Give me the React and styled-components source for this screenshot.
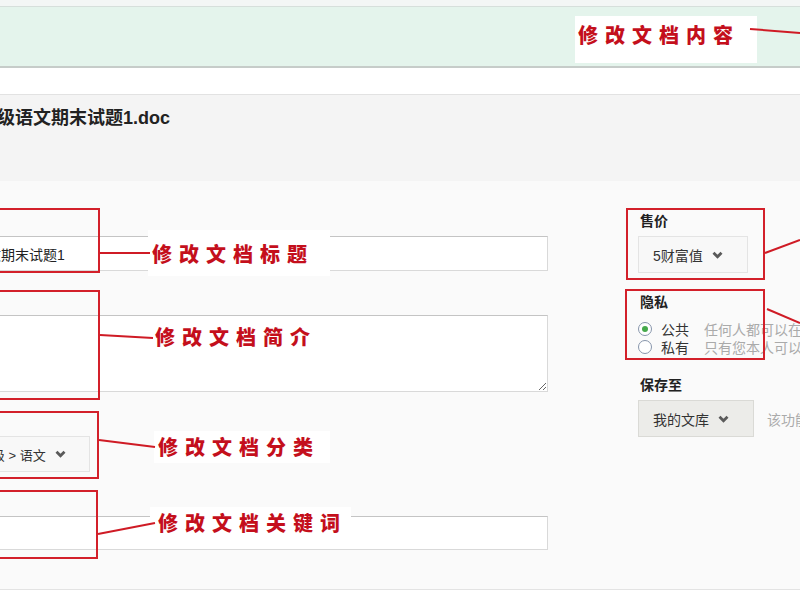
import styled, { createGlobalStyle } from 'styled-components'

const GlobalStyle = createGlobalStyle`
    html, body {
        margin: 0;
        padding: 0;
        background: #ffffff;
    }
    body {
        font-family: "Liberation Sans", "Noto Sans CJK SC", sans-serif;
        font-size: 14px;
        color: #333;
    }
`;

const Page = styled.div`
    position: relative;
    width: 800px;
    height: 600px;
    overflow: hidden;
    background: #ffffff;
`;

const TopStrip = styled.div`
    height: 6px;
    background: #f3f6f5;
    border-bottom: 1px solid #d6dfdb;
`;

const Banner = styled.div`
    height: 59px;
    background: #e4f4ec;
    border-bottom: 2px solid #c6ccc9;
`;

const Spacer = styled.div`
    height: 26px;
    border-bottom: 1px solid #e2e2e2;
`;

const DocHeader = styled.div`
    height: 86px;
    padding-top: 12px;
    box-sizing: border-box;
    background: #f4f4f4;
`;

const DocTitle = styled.h1`
    margin: 0 0 0 -75px;
    font-size: 18px;
    line-height: 22px;
    font-weight: bold;
    color: #222;
    white-space: nowrap;
`;

const FormArea = styled.div`
    display: flex;
    padding: 26px 0 39px;
    background: #fafafa;
    border-bottom: 1px solid #e3e3e3;
`;

const LeftCol = styled.div`
    flex-shrink: 0;
    width: 654px;
    margin-left: -106px;
    display: flex;
    flex-direction: column;
    gap: 15px;
`;

const Field = styled.div`
    display: flex;
    flex-direction: column;
    align-items: flex-start;
`;

const FieldLabel = styled.label`
    line-height: 20px;
    margin-bottom: 9px;
    font-weight: bold;
    color: #333;
`;

const TextInput = styled.input`
    width: 100%;
    height: ${p => p.$h || 35}px;
    box-sizing: border-box;
    padding: 0 8px;
    border: 1px solid #d9d9d9;
    border-top-color: #c4c4c4;
    background: #fff;
    font-family: inherit;
    font-size: 14px;
    color: #222;
    outline: none;
`;

const TextArea = styled.textarea`
    width: 100%;
    height: 77px;
    box-sizing: border-box;
    padding: 6px 8px;
    border: 1px solid #d9d9d9;
    border-top-color: #c4c4c4;
    background: #fff;
    font-family: inherit;
    font-size: 14px;
    outline: none;
    resize: vertical;
`;

const SelectButton = styled.button`
    display: inline-flex;
    align-items: center;
    gap: ${p => p.$gap || 9}px;
    height: ${p => p.$h || 37}px;
    padding: 0 ${p => p.$right || 24}px 0 ${p => p.$left || 14}px;
    border: 1px solid ${p => (p.$muted ? '#dadad6' : '#e4e4e4')};
    background: ${p => (p.$muted ? '#ecece9' : '#f8f8f8')};
    font-family: inherit;
    font-size: ${p => p.$size || 14}px;
    color: #333;
    white-space: nowrap;
    cursor: pointer;
`;

const RightCol = styled.div`
    flex-shrink: 0;
    margin-left: 90px;
    width: 260px;
    display: flex;
    flex-direction: column;
    align-items: flex-start;
    white-space: nowrap;
`;

const SideLabel = styled.div`
    margin: ${p => p.$top || 0}px 0 ${p => p.$bottom || 4}px 2px;
    line-height: 22px;
    font-weight: bold;
    color: #222;
`;

const RadioRow = styled.label`
    display: flex;
    align-items: center;
    height: 18px;
`;

const RadioDot = styled.span`
    position: relative;
    width: 12px;
    height: 12px;
    border: 1.5px solid #8795ab;
    border-radius: 50%;
    background: #fff;
    margin-right: 9px;
    &::after {
        content: '';
        display: ${p => (p.$checked ? 'block' : 'none')};
        position: absolute;
        left: 3px;
        top: 3px;
        width: 6px;
        height: 6px;
        border-radius: 50%;
        background: #45a94a;
    }
`;

const RadioText = styled.span`
    color: #333;
    margin-right: 15px;
`;

const Hint = styled.span`
    color: #aaa;
`;

const SaveRow = styled.div`
    display: flex;
    align-items: center;
    gap: 13px;
`;

// red annotation layer drawn over the screenshot
const Box = styled.div`
    position: absolute;
    left: ${p => p.$l}px;
    top: ${p => p.$t}px;
    width: ${p => p.$r - p.$l}px;
    height: ${p => p.$b - p.$t}px;
    box-sizing: border-box;
    border: 2px solid #d3202a;
`;

const Note = styled.div`
    position: absolute;
    left: ${p => p.$l}px;
    top: ${p => p.$t}px;
    padding: ${p => p.$pad};
    background: #fff;
    font-family: "Noto Sans CJK SC", sans-serif;
    font-size: 20px;
    line-height: 24px;
    font-weight: 900;
    letter-spacing: 7px;
    color: #c40f1c;
    white-space: nowrap;
`;

const Lines = styled.svg`
    position: absolute;
    left: 0;
    top: 0;
    pointer-events: none;
`;

const Chevron = () => (
    <svg width="11" height="8" viewBox="0 0 11 8">
        <path d="M1.5 1.8 L5.5 5.8 L9.5 1.8" fill="none" stroke="#5a5a5a" strokeWidth="2.8" />
    </svg>
)

const boxes = [
    { l: -4, t: 208, r: 100, b: 273 },
    { l: -4, t: 290, r: 100, b: 400 },
    { l: -4, t: 411, r: 99, b: 479 },
    { l: -4, t: 490, r: 98, b: 559 },
    { l: 626, t: 208, r: 765, b: 280 },
    { l: 625, t: 289, r: 765, b: 360 },
]

const notes = [
    { text: '修改文档内容', l: 575, t: 16, pad: '7px 17px 16px 3px' },
    { text: '修改文档标题', l: 148, t: 230, pad: '12px 16px 10px 4px' },
    { text: '修改文档简介', l: 151, t: 321, pad: '4px 10px 4px 4px' },
    { text: '修改文档分类', l: 154, t: 431, pad: '4px 10px 4px 4px' },
    { text: '修改文档关键词', l: 150, t: 507, pad: '4px 4px 4px 8px' },
]

const lines = [
    [750, 29, 800, 33],
    [100, 253, 150, 253],
    [100, 335, 153, 338],
    [99, 440, 155, 447],
    [98, 534, 155, 523],
    [765, 253, 800, 240],
    [767, 309, 800, 323],
]

const App = () => {
    return (
        <>
            <GlobalStyle />
            <Page>
                <TopStrip />
                <Banner />
                <Spacer />
                <DocHeader>
                    <DocTitle>小学六年级语文期末试题1.doc</DocTitle>
                </DocHeader>
                <FormArea>
                    <LeftCol>
                        <Field>
                            <FieldLabel>标题</FieldLabel>
                            <TextInput defaultValue="小学六年级语文期末试题1" />
                        </Field>
                        <Field>
                            <FieldLabel>简介</FieldLabel>
                            <TextArea />
                        </Field>
                        <Field>
                            <FieldLabel>分类</FieldLabel>
                            <SelectButton $h={36} $left={30} $right={23} $gap={9} $size={13}>
                                小学 &gt; 六年级 &gt; 语文 <Chevron />
                            </SelectButton>
                        </Field>
                        <Field>
                            <FieldLabel>关键词</FieldLabel>
                            <TextInput $h={34} />
                        </Field>
                    </LeftCol>
                    <RightCol>
                        <SideLabel $top={3}>售价</SideLabel>
                        <SelectButton>5财富值 <Chevron /></SelectButton>
                        <SideLabel $top={18} $bottom={7}>隐私</SideLabel>
                        <RadioRow>
                            <RadioDot $checked />
                            <RadioText>公共</RadioText>
                            <Hint>任何人都可以在百度文库中搜索到</Hint>
                        </RadioRow>
                        <RadioRow>
                            <RadioDot />
                            <RadioText>私有</RadioText>
                            <Hint>只有您本人可以查看</Hint>
                        </RadioRow>
                        <SideLabel $top={18}>保存至</SideLabel>
                        <SaveRow>
                            <SelectButton $muted>我的文库 <Chevron /></SelectButton>
                            <Hint>该功能暂未开放</Hint>
                        </SaveRow>
                    </RightCol>
                </FormArea>

                {boxes.map((b, i) => (
                    <Box key={i} $l={b.l} $t={b.t} $r={b.r} $b={b.b} />
                ))}
                {notes.map(n => (
                    <Note key={n.text} $l={n.l} $t={n.t} $pad={n.pad}>{n.text}</Note>
                ))}
                <Lines width="800" height="600">
                    {lines.map(([x1, y1, x2, y2], i) => (
                        <line key={i} x1={x1} y1={y1} x2={x2} y2={y2} stroke="#cf1b25" strokeWidth="2" />
                    ))}
                </Lines>
            </Page>
        </>
    )
}

export default App
